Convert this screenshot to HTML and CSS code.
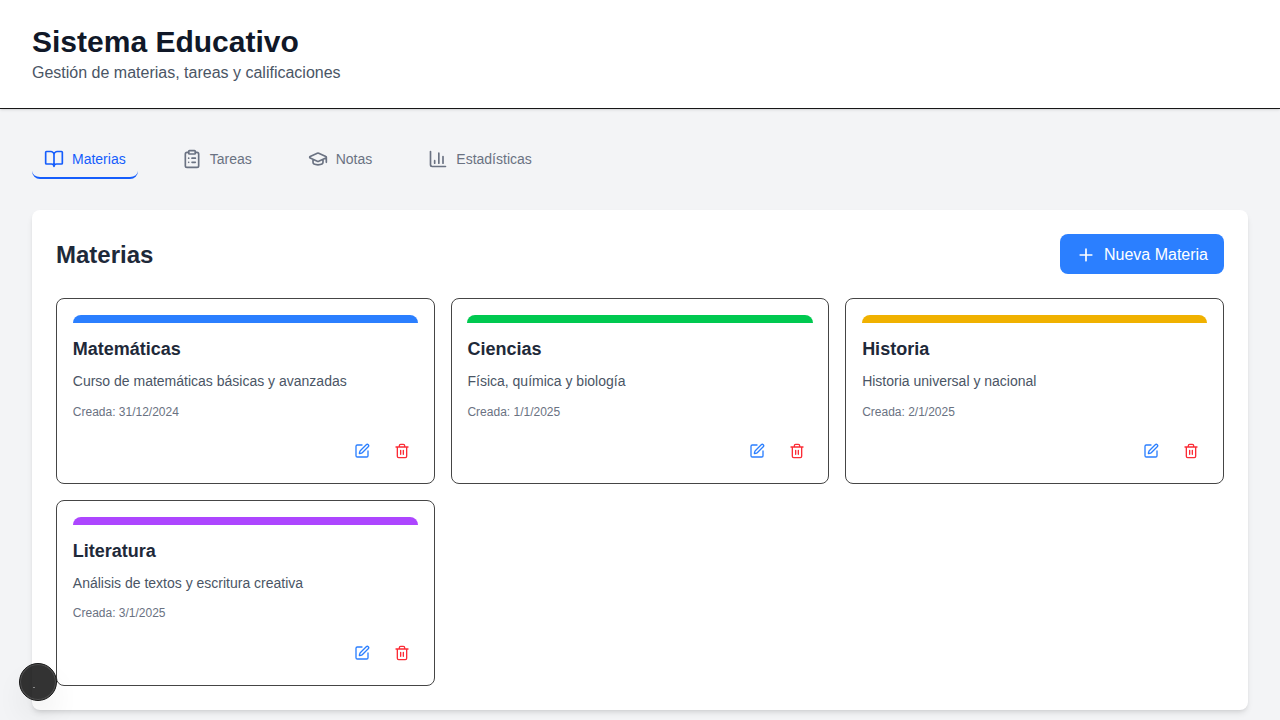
FILE: index.html
```html
<!DOCTYPE html>
<html lang="es">
<head>
<meta charset="utf-8">
<title>Sistema Educativo</title>
<link rel="stylesheet" href="styles.css">
</head>
<body>
<svg class="sprite" aria-hidden="true">
  <symbol id="pen" viewBox="0 0 24 24"><path d="M12 3H5a2 2 0 0 0-2 2v14a2 2 0 0 0 2 2h14a2 2 0 0 0 2-2v-7"/><path d="M18.375 2.625a1 1 0 0 1 3 3l-9.013 9.014a2 2 0 0 1-.853.505l-2.873.84a.5.5 0 0 1-.62-.62l.84-2.873a2 2 0 0 1 .506-.852z"/></symbol>
  <symbol id="trash" viewBox="0 0 24 24"><path d="M3 6h18M19 6v14a2 2 0 0 1-2 2H7a2 2 0 0 1-2-2V6M8 6V4a2 2 0 0 1 2-2h4a2 2 0 0 1 2 2v2M10 11v6M14 11v6"/></symbol>
</svg>
<header class="header">
  <h1 class="header-title">Sistema Educativo</h1>
  <p class="header-subtitle">Gestión de materias, tareas y calificaciones</p>
</header>
<main class="main">
  <nav class="tabs">
    <button class="tab tab-active"><svg class="icon" viewBox="0 0 24 24"><path d="M12 7v14M3 18a1 1 0 0 1-1-1V4a1 1 0 0 1 1-1h5a4 4 0 0 1 4 4 4 4 0 0 1 4-4h5a1 1 0 0 1 1 1v13a1 1 0 0 1-1 1h-6a3 3 0 0 0-3 3 3 3 0 0 0-3-3z"/></svg>Materias</button>
    <button class="tab"><svg class="icon" viewBox="0 0 24 24"><rect width="8" height="4" x="8" y="2" rx="1"/><path d="M16 4h2a2 2 0 0 1 2 2v14a2 2 0 0 1-2 2H6a2 2 0 0 1-2-2V6a2 2 0 0 1 2-2h2M12 11h4M12 16h4M8 11h.01M8 16h.01"/></svg>Tareas</button>
    <button class="tab"><svg class="icon" viewBox="0 0 24 24"><path d="M21.42 10.922a1 1 0 0 0-.019-1.838L12.83 5.18a2 2 0 0 0-1.66 0L2.6 9.08a1 1 0 0 0 0 1.832l8.57 3.908a2 2 0 0 0 1.66 0zM22 10v6M6 12.5V16a6 3 0 0 0 12 0v-3.5"/></svg>Notas</button>
    <button class="tab"><svg class="icon" viewBox="0 0 24 24"><path d="M3 3v16a2 2 0 0 0 2 2h16M18 17V9M13 17V5M8 17v-3"/></svg>Estadísticas</button>
  </nav>
  <section class="panel">
    <div class="panel-head">
      <h2 class="panel-title">Materias</h2>
      <button class="add"><svg class="icon" viewBox="0 0 24 24"><path d="M5 12h14M12 5v14"/></svg>Nueva Materia</button>
    </div>
    <div class="grid">
      <article class="card">
        <div class="bar blue"></div>
        <h3 class="card-title">Matemáticas</h3>
        <p class="card-text">Curso de matemáticas básicas y avanzadas</p>
        <p class="card-date">Creada: 31/12/2024</p>
        <div class="actions"><button class="action edit"><svg class="icon"><use href="#pen"/></svg></button><button class="action remove"><svg class="icon"><use href="#trash"/></svg></button></div>
      </article>
      <article class="card">
        <div class="bar green"></div>
        <h3 class="card-title">Ciencias</h3>
        <p class="card-text">Física, química y biología</p>
        <p class="card-date">Creada: 1/1/2025</p>
        <div class="actions"><button class="action edit"><svg class="icon"><use href="#pen"/></svg></button><button class="action remove"><svg class="icon"><use href="#trash"/></svg></button></div>
      </article>
      <article class="card">
        <div class="bar yellow"></div>
        <h3 class="card-title">Historia</h3>
        <p class="card-text">Historia universal y nacional</p>
        <p class="card-date">Creada: 2/1/2025</p>
        <div class="actions"><button class="action edit"><svg class="icon"><use href="#pen"/></svg></button><button class="action remove"><svg class="icon"><use href="#trash"/></svg></button></div>
      </article>
      <article class="card">
        <div class="bar purple"></div>
        <h3 class="card-title">Literatura</h3>
        <p class="card-text">Análisis de textos y escritura creativa</p>
        <p class="card-date">Creada: 3/1/2025</p>
        <div class="actions"><button class="action edit"><svg class="icon"><use href="#pen"/></svg></button><button class="action remove"><svg class="icon"><use href="#trash"/></svg></button></div>
      </article>
    </div>
  </section>
</main>
<div class="badge"><span class="badge-dot"></span></div>
</body>
</html>
```
FILE: styles.css
```css
* { box-sizing: border-box; margin: 0; padding: 0; }
body {
  height: 720px;
  overflow: hidden;
  background: #f3f4f6;
  color: #171717;
  font-family: "Liberation Sans", Arial, sans-serif;
  font-size: 16px;
  line-height: 24px;
}
button { border: 0; background: none; font: inherit; color: inherit; }
.sprite { position: absolute; width: 0; height: 0; }
.icon {
  width: 20px;
  height: 20px;
  flex: none;
  fill: none;
  stroke: currentColor;
  stroke-width: 2;
  stroke-linecap: round;
  stroke-linejoin: round;
}
.header {
  padding: 24px 32px 23px;
  background: #fff;
  border-bottom: 1px solid #171717;
  box-shadow: 0 1px 3px rgba(0, 0, 0, .1), 0 1px 2px -1px rgba(0, 0, 0, .1);
}
.header-title { margin-bottom: 1px; font-size: 30px; line-height: 36px; color: #101828; }
.header-subtitle { color: #4a5565; }
.main { padding: 31.8px 32px; }
.tabs { display: flex; gap: 32px; margin-bottom: 31.6px; }
.tab {
  display: flex;
  align-items: center;
  gap: 8px;
  height: 38px;
  padding: 8px 12px;
  border-bottom: 2px solid transparent;
  border-radius: 8px;
  font-size: 14px;
  line-height: 20px;
  color: #6a7282;
}
.tab-active { color: #155dfc; border-bottom-color: #155dfc; }
.panel {
  padding: 24px;
  background: #fff;
  border-radius: 8px;
  box-shadow: 0 4px 6px -1px rgba(0, 0, 0, .1), 0 2px 4px -2px rgba(0, 0, 0, .1);
}
.panel-head { display: flex; align-items: center; justify-content: space-between; margin-bottom: 24px; }
.panel-title { padding-top: 2px; font-size: 24px; line-height: 32px; color: #1e2939; }
.add {
  display: flex;
  align-items: center;
  gap: 8px;
  height: 40px;
  padding: 9px 16px 7px;
  border-radius: 8px;
  background: #2b7fff;
  color: #fff;
}
.grid { display: grid; grid-template-columns: repeat(3, 1fr); gap: 16px; }
.card {
  height: 185.6px;
  padding: 15.8px;
  border: 1px solid #454545;
  border-radius: 8px;
}
.bar { height: 8px; margin-bottom: 12px; border-radius: 8px 8px 0 0; }
.blue { background: #2b7fff; }
.green { background: #00c950; }
.yellow { background: #f0b100; }
.purple { background: #ad46ff; }
.card-title { margin-bottom: 8px; font-size: 18px; line-height: 28px; color: #1e2939; }
.card-text { margin-bottom: 12.4px; font-size: 14px; line-height: 20px; color: #4a5565; }
.card-date { margin-bottom: 15.6px; font-size: 12px; line-height: 16px; color: #6a7282; }
.actions { display: flex; justify-content: flex-end; gap: 8px; }
.action { display: flex; padding: 8px; }
.action .icon { width: 16px; height: 16px; }
.edit { color: #2b7fff; }
.remove { color: #fb2c36; }
.badge {
  position: fixed;
  left: 19px;
  bottom: 19px;
  width: 38px;
  height: 38px;
  border: 1px solid #171717;
  border-radius: 50%;
  background: rgba(0, 0, 0, .8);
  box-shadow: inset 0 0 0 1px rgba(255, 255, 255, .14), 0 16px 32px -8px rgba(0, 0, 0, .16);
}
.badge-dot { position: absolute; left: 13px; top: 23px; width: 2px; height: 1px; background: #888; }
```
